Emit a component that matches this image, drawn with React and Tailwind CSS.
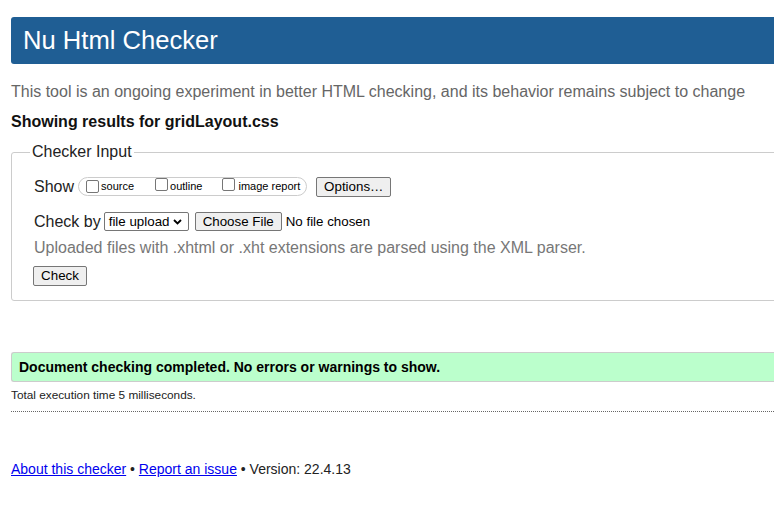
export default function App() {
  const Checkbox = () => (
    <span className="inline-block w-[13px] h-[13px] border border-[#767676] rounded-[2px] bg-white shrink-0" />
  );
  return (
    <div className="w-[774px] h-[527px] overflow-hidden bg-white text-[#222]" style={{ fontFamily: '"Liberation Sans", Arial, sans-serif' }}>
      <div className="w-[830px] pl-[11px]">
        <div className="mt-[17px] h-[47px] bg-[#1f5e94] rounded-[3px] pl-[12px] flex items-center text-white text-[25.6px] leading-none">
          Nu Html Checker
        </div>
        <p className="mt-[19px] text-[16px] leading-[18px] text-[#666] whitespace-nowrap">
          This tool is an ongoing experiment in better HTML checking, and its behavior remains subject to change
        </p>
        <p className="mt-[12px] text-[16px] leading-[18px] font-bold text-[#111]">Showing results for gridLayout.css</p>
        <fieldset className="mt-[12px] border border-[#ccc] rounded-[3px] px-[22px] pb-[14px]">
          <legend className="-ml-[4px] px-[2px] text-[16px] leading-[18px] text-[#222]">Checker Input</legend>
          <div className="mt-[15px] h-[21px] flex items-center">
            <span className="text-[16px] leading-[18px]">Show</span>
            <span className="ml-[4px] h-[19px] border border-[#ccc] rounded-full flex items-center pl-[7px] pr-[6px] text-[11px] text-black">
              <Checkbox />
              <span className="ml-[2px]">source</span>
              <span className="ml-[21px]"><Checkbox /></span>
              <span className="ml-[2px]">outline</span>
              <span className="ml-[20px]"><Checkbox /></span>
              <span className="ml-[3px]">image report</span>
            </span>
            <span className="ml-[9px] h-[20px] w-[75px] flex items-center justify-center bg-[#efefef] border border-[#767676] rounded-[2px] text-[13.33px] text-black">
              Options…
            </span>
          </div>
          <div className="mt-[15px] h-[19px] flex items-center">
            <span className="text-[16px] leading-[18px]">Check by</span>
            <span className="ml-[3px] h-[19px] w-[85px] border border-[#767676] rounded-[2px] bg-white flex items-center pl-[4px] text-[13.33px] text-black">
              file upload
              <svg className="ml-[4px]" width="9" height="6" viewBox="0 0 9 6">
                <path d="M1 1l3.5 3.5L8 1" fill="none" stroke="#000" strokeWidth="1.8" />
              </svg>
            </span>
            <span className="ml-[6px] h-[19px] w-[87px] flex items-center justify-center bg-[#efefef] border border-[#767676] rounded-[2px] text-[13.33px] text-black">
              Choose File
            </span>
            <span className="ml-[4px] text-[13.33px] text-black">No file chosen</span>
          </div>
          <p className="mt-[8px] text-[16px] leading-[18px] text-[#777]">
            Uploaded files with .xhtml or .xht extensions are parsed using the XML parser.
          </p>
          <div className="mt-[9px] -ml-[1px] h-[20px] w-[54px] flex items-center justify-center bg-[#efefef] border border-[#767676] rounded-[2px] text-[13.33px] text-black">
            Check
          </div>
        </fieldset>
        <div className="mt-[51px] h-[30px] bg-[#bbffcc] border-y border-l border-[#ccc] rounded-l-[3px] pl-[7px] flex items-center text-[14px] font-bold text-black">
          Document checking completed. No errors or warnings to show.
        </div>
        <p className="mt-[6px] text-[11.8px] leading-[14px] text-[#222]">Total execution time 5 milliseconds.</p>
        <div className="mt-[9px] border-t border-dotted border-[#666]" />
        <p className="mt-[49px] text-[14px] leading-[16px] text-[#222]">
          <a className="text-[#0000ee] underline" href="#">About this checker</a>
          {" • "}
          <a className="text-[#0000ee] underline" href="#">Report an issue</a>
          {" • Version: 22.4.13"}
        </p>
      </div>
    </div>
  );
}
